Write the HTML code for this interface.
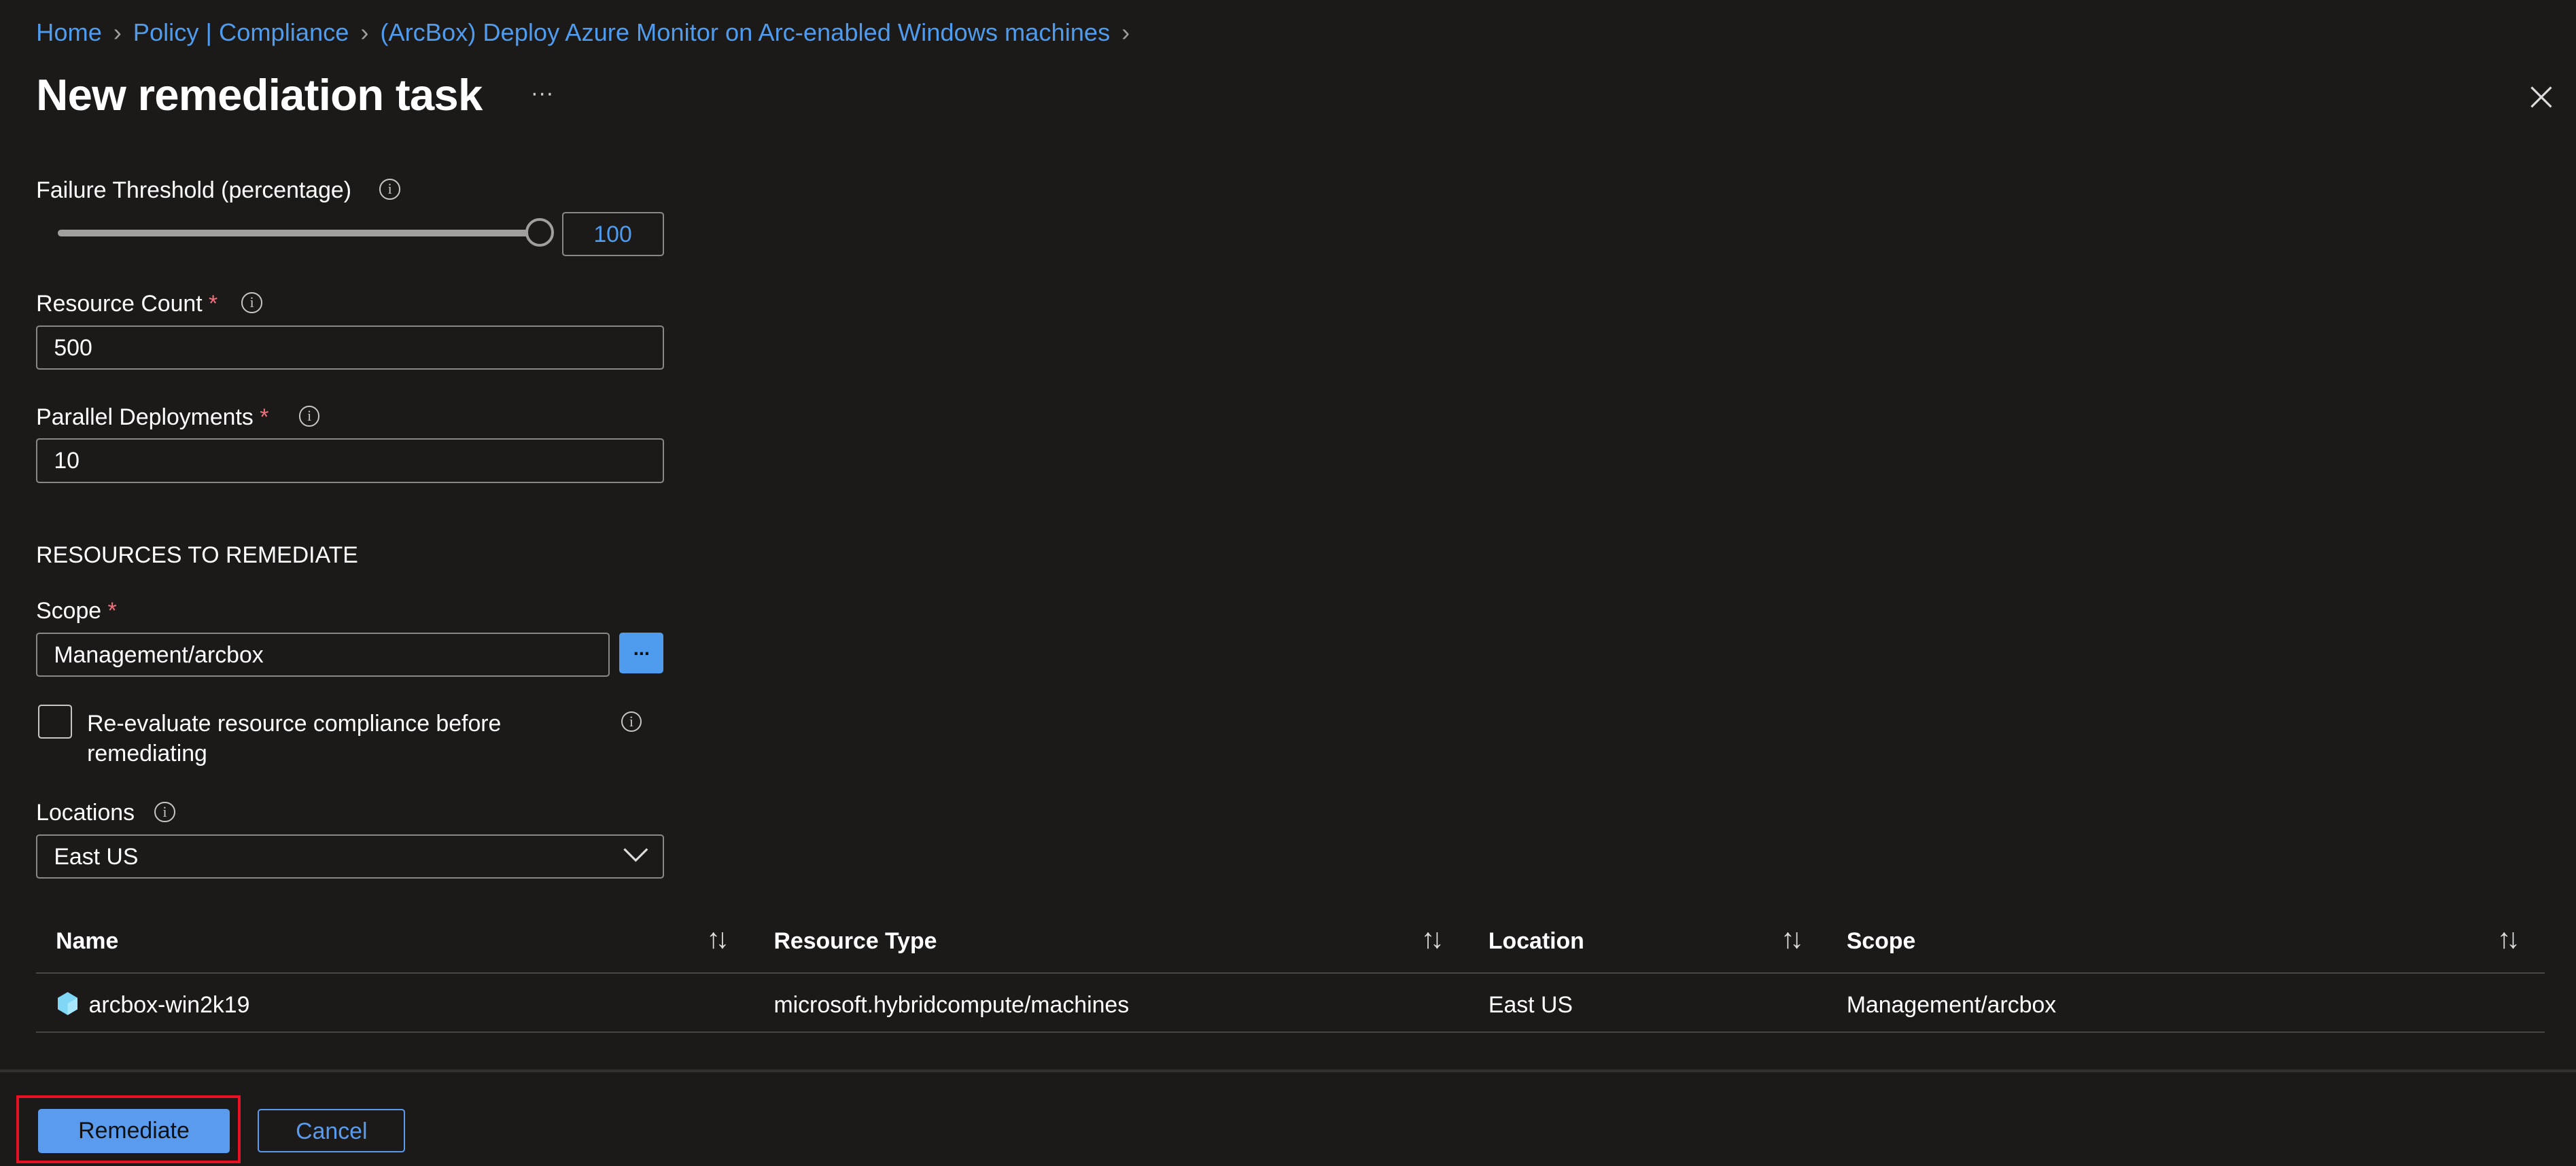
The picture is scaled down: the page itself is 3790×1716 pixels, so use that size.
<!DOCTYPE html>
<html><head><meta charset="utf-8"><style>
html,body{margin:0;padding:0;background:#1b1a19;overflow:hidden}
#w{zoom:2.4171;width:1568px;height:710px;position:relative;font-family:"Liberation Sans",sans-serif;color:#fff;font-size:14px}
.a{position:absolute;white-space:nowrap}
.bc{color:#4f9bed;font-size:15px}
.bc i{font-style:normal;color:#a19f9d;margin:0 7px}
.inp{position:absolute;border:1px solid #8a8886;border-radius:2px;box-sizing:border-box;padding-left:10px;line-height:26px;font-size:14px}
.info{position:absolute;width:11px;height:11px;border:1px solid #c8c6c4;border-radius:50%;font-size:9px;line-height:11px;text-align:center;color:#c8c6c4;font-family:"Liberation Serif",serif}
.req{color:#f1707b}
.hd{font-weight:600;font-size:14px}
.sort{position:absolute;font-size:17px;color:#ddd;letter-spacing:-3px}
.line{position:absolute;height:1px;background:#484644}
</style></head><body><div id="w">
<div class="a bc" style="left:22px;top:11px">Home<i>›</i>Policy | Compliance<i>›</i>(ArcBox) Deploy Azure Monitor on Arc-enabled Windows machines<i>›</i></div>
<div class="a" style="left:22px;top:42px;font-size:27px;font-weight:600;letter-spacing:-0.3px">New remediation task</div>
<div class="a" style="left:323px;top:49px;font-size:14px;color:#ccc">···</div>
<svg class="a" style="left:1540px;top:52px" width="14" height="14"><path d="M1 1L13 13M13 1L1 13" stroke="#ddd" stroke-width="1.3"/></svg>

<div class="a" style="left:22px;top:108px">Failure Threshold (percentage)</div>
<div class="info" style="left:231px;top:109px">i</div>
<div class="a" style="left:35px;top:140px;width:290px;height:4px;background:#a19f9d;border-radius:2px"></div>
<div class="a" style="left:320px;top:133px;width:14px;height:14px;border:2px solid #a19f9d;border-radius:50%;background:#1b1a19"></div>
<div class="inp" style="left:342px;top:129px;width:62px;height:27px;text-align:center;padding:0;color:#4f9bed">100</div>

<div class="a" style="left:22px;top:177px">Resource Count <span class="req">*</span></div>
<div class="info" style="left:147px;top:178px">i</div>
<div class="inp" style="left:22px;top:198px;width:382px;height:27px">500</div>

<div class="a" style="left:22px;top:246px">Parallel Deployments <span class="req">*</span></div>
<div class="info" style="left:182px;top:247px">i</div>
<div class="inp" style="left:22px;top:267px;width:382px;height:27px">10</div>

<div class="a" style="left:22px;top:330px">RESOURCES TO REMEDIATE</div>
<div class="a" style="left:22px;top:364px">Scope <span class="req">*</span></div>
<div class="inp" style="left:22px;top:385px;width:349px;height:27px">Management/arcbox</div>
<div class="a" style="left:377px;top:385px;width:27px;height:25px;background:#4f9bed;border-radius:2px;text-align:center;line-height:20px;color:#111;font-size:12px;font-weight:bold">...</div>

<div class="a" style="left:23px;top:429px;width:19px;height:19px;border:1px solid #c8c6c4;border-radius:2px"></div>
<div class="a" style="left:53px;top:432px;line-height:18px">Re-evaluate resource compliance before<br>remediating</div>
<div class="info" style="left:378px;top:433px">i</div>

<div class="a" style="left:22px;top:487px">Locations</div>
<div class="info" style="left:94px;top:488px">i</div>
<div class="inp" style="left:22px;top:508px;width:382px;height:27px">East US</div>
<svg class="a" style="left:379px;top:516px" width="16" height="10"><path d="M1 1L8 8L15 1" stroke="#ddd" fill="none" stroke-width="1.3"/></svg>

<div class="a hd" style="left:34px;top:565px">Name</div>
<div class="sort" style="left:430px;top:562px">↑↓</div>
<div class="a hd" style="left:471px;top:565px">Resource Type</div>
<div class="sort" style="left:865px;top:562px">↑↓</div>
<div class="a hd" style="left:906px;top:565px">Location</div>
<div class="sort" style="left:1084px;top:562px">↑↓</div>
<div class="a hd" style="left:1124px;top:565px">Scope</div>
<div class="sort" style="left:1520px;top:562px">↑↓</div>
<div class="line" style="left:22px;top:592px;width:1527px"></div>
<svg class="a" style="left:35px;top:604px" width="12" height="14"><path d="M6 0L12 3.5V10.5L6 14L0 10.5V3.5Z" fill="#7fd6f5"/><path d="M6 7L12 3.5V10.5L6 14Z" fill="#a8e6fb"/></svg>
<div class="a" style="left:54px;top:604px">arcbox-win2k19</div>
<div class="a" style="left:471px;top:604px">microsoft.hybridcompute/machines</div>
<div class="a" style="left:906px;top:604px">East US</div>
<div class="a" style="left:1124px;top:604px">Management/arcbox</div>
<div class="line" style="left:22px;top:628px;width:1527px"></div>

<div class="line" style="left:0;top:651px;width:1568px;height:2px;background:#323130"></div>
<div class="a" style="left:10px;top:667px;width:133px;height:38px;border:2px solid #e81123"></div>
<div class="a" style="left:23px;top:675px;width:117px;height:27px;background:#5a9bee;border-radius:2px;color:#111;text-align:center;line-height:27px">Remediate</div>
<div class="a" style="left:157px;top:675px;width:88px;height:25px;border:1px solid #5a9bee;border-radius:2px;color:#5a9bee;text-align:center;line-height:26px">Cancel</div>
</div></body></html>
